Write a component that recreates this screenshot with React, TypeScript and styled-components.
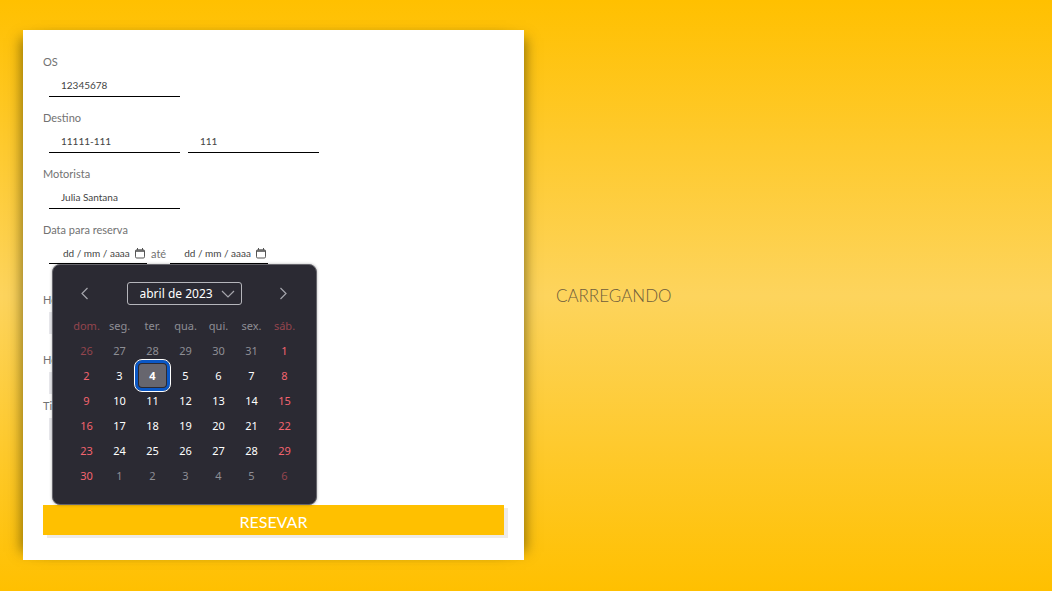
import React from "react";
import styled, { createGlobalStyle } from "styled-components";

const Global = createGlobalStyle`
  * { box-sizing: border-box; }
  body { margin: 0; font-family: Lato, "Open Sans", sans-serif; color: #727272; }
  button, input, select { font-family: inherit; margin: 0; }
`;

const Page = styled.main`
  min-height: 100vh;
  padding: 30px 23px 31px;
  display: grid;
  grid-template-columns: 18fr 17fr;
  gap: 32px;
  background: linear-gradient(#ffc000, #fdd45d, #ffc000);
`;

const Card = styled.form`
  display: flex;
  flex-direction: column;
  padding: 25px 20px;
  background: #fff;
  box-shadow: 10px 0 12px -8px rgba(70, 60, 0, 0.6), -10px 0 12px -8px rgba(70, 60, 0, 0.6);
`;

const Field = styled.div<{ $height: number }>`
  position: relative;
  min-height: ${(p) => p.$height}px;
`;

const Label = styled.label`
  display: block;
  font-size: 11px;
  line-height: 14px;
`;

const Row = styled.div<{ $gap?: number }>`
  display: flex;
  gap: ${(p) => p.$gap ?? 8}px;
  margin: 6px 0 0 6px;
  align-items: center;
  font-size: 11px;
`;

const TextInput = styled.input`
  width: 131px;
  height: 22px;
  padding: 0 12px 2px;
  border: 0;
  border-bottom: 1px solid #000;
  background: transparent;
  font-size: 10px;
  color: #444;
  outline: 0;
`;

const DateBox = styled.div`
  display: flex;
  align-items: center;
  width: 98px;
  height: 21px;
  padding: 0 2px 0 14px;
  border-bottom: 1px solid #000;
`;

const DateInput = styled.input`
  flex: 1;
  min-width: 0;
  padding: 0;
  border: 0;
  background: transparent;
  font-size: 10px;
  color: #444;
  outline: 0;
`;

const IconButton = styled.button`
  display: flex;
  padding: 0;
  border: 0;
  background: transparent;
  color: inherit;
`;

const Choice = styled.select`
  display: block;
  width: 131px;
  height: 22px;
  margin: 5px 0 0 6px;
  border: 0;
  background: #e9e9ed;
  font-size: 11px;
`;

const Submit = styled.button`
  height: 30px;
  margin-top: auto;
  padding: 2px 0 0;
  border: 0;
  background: #ffc000;
  box-shadow: 4px 3px 0 #efebe6;
  color: #fff;
  font-size: 16px;
`;

const Status = styled.p`
  align-self: center;
  margin: 0;
  font-size: 17px;
  font-weight: 300;
  color: #6d5c3b;
`;

const Calendar = styled.section`
  position: absolute;
  z-index: 1;
  top: 41px;
  left: 9px;
  width: 265px;
  height: 241px;
  padding: 17px 16px 17px 17px;
  border: 1px solid #66656c;
  border-radius: 8px;
  background: #2b2a33;
  box-shadow: 0 0 3px rgba(0, 0, 0, 0.3);
  color: #fff;
  font-family: "Noto Sans", sans-serif;
`;

const CalendarHead = styled.div`
  display: flex;
  align-items: center;
  justify-content: space-between;
  height: 23px;
  padding: 0 12px 0 10px;
  color: #a5a5ac;
`;

const MonthBox = styled.div`
  position: relative;
  display: flex;
  align-items: center;
  svg { position: absolute; right: 7px; pointer-events: none; }
`;

const MonthSelect = styled.select`
  appearance: none;
  width: 115px;
  height: 23px;
  padding: 0 12px;
  border: 1px solid #b5b5bb;
  border-radius: 3px;
  background: transparent;
  color: #fff;
  font-size: 12px;
`;

const Days = styled.table`
  margin-top: 8px;
  border-collapse: collapse;
  table-layout: fixed;
  width: 231px;
`;

const Cell = styled.td<{ $weekend: boolean; $muted: boolean }>`
  height: 25px;
  padding: 0;
  text-align: center;
  font-size: 11px;
  font-weight: 400;
  color: ${(p) => (p.$weekend ? (p.$muted ? "#94454e" : "#f3646f") : p.$muted ? "#8e8e95" : "#fff")};
`;

const Day = styled.button<{ $selected: boolean }>`
  display: block;
  width: 27px;
  height: 23px;
  margin: 0 auto;
  padding: 0;
  border: 0;
  border-radius: 3px;
  font-size: 11px;
  color: inherit;
  background: ${(p) => (p.$selected ? "#67666e" : "transparent")};
  font-weight: ${(p) => (p.$selected ? 700 : 400)};
  outline: ${(p) => (p.$selected ? "1px solid #fff" : "none")};
  outline-offset: 4px;
  box-shadow: ${(p) => (p.$selected ? "0 0 0 1px #2b2a33, 0 0 0 4px #0a57c5" : "none")};
`;

const weekdays = ["dom.", "seg.", "ter.", "qua.", "qui.", "sex.", "sáb."];
const weeks = [
  [26, 27, 28, 29, 30, 31, 1],
  [2, 3, 4, 5, 6, 7, 8],
  [9, 10, 11, 12, 13, 14, 15],
  [16, 17, 18, 19, 20, 21, 22],
  [23, 24, 25, 26, 27, 28, 29],
  [30, 1, 2, 3, 4, 5, 6],
];

const isMuted = (week: number, day: number) => (week === 0 && day > 20) || (week === 5 && day < 20);

function Chevron({ d, w, h }: { d: string; w: number; h: number }) {
  return (
    <svg width={w} height={h} viewBox={`0 0 ${w} ${h}`} fill="none" stroke="currentColor" strokeWidth="1.2" aria-hidden="true">
      <path d={d} />
    </svg>
  );
}

function DateField({ id, label }: { id: string; label: string }) {
  return (
    <DateBox>
      <DateInput id={id} aria-label={label} defaultValue="dd / mm / aaaa" />
      <IconButton type="button" aria-label={`Abrir calendário: ${label}`}>
        <svg width="10" height="11" viewBox="0 0 10 11" fill="none" stroke="#555">
          <rect x="0.5" y="1.8" width="9" height="8.2" rx="1.2" />
          <path d="M1 3h8" strokeWidth="1.6" />
          <path d="M2.5 0v2M7.5 0v2" />
        </svg>
      </IconButton>
    </DateBox>
  );
}

function DatePicker() {
  return (
    <Calendar aria-label="Calendário">
      <CalendarHead>
        <IconButton type="button" aria-label="Mês anterior">
          <Chevron d="M7.5 2 2 7.5l5.500 5.500" w={9} h={15} />
        </IconButton>
        <MonthBox>
          <MonthSelect aria-label="Mês">
            <option>abril de 2023</option>
          </MonthSelect>
          <Chevron d="M1 1l6 6 6-6" w={14} h={8} />
        </MonthBox>
        <IconButton type="button" aria-label="Próximo mês">
          <Chevron d="M1.5 2 7 7.500l-5.500 5.500" w={9} h={15} />
        </IconButton>
      </CalendarHead>
      <Days>
        <thead>
          <tr>
            {weekdays.map((name, i) => (
              <Cell as="th" key={name} $weekend={i % 6 === 0} $muted>
                {name}
              </Cell>
            ))}
          </tr>
        </thead>
        <tbody>
          {weeks.map((week, w) => (
            <tr key={w}>
              {week.map((day, i) => (
                <Cell key={day} $weekend={i % 6 === 0} $muted={isMuted(w, day)}>
                  <Day type="button" $selected={w === 1 && day === 4}>
                    {day}
                  </Day>
                </Cell>
              ))}
            </tr>
          ))}
        </tbody>
      </Days>
    </Calendar>
  );
}

export default function App() {
  return (
    <Page>
      <Global />
      <Card>
        <Field $height={56}>
          <Label htmlFor="os">OS</Label>
          <Row>
            <TextInput id="os" defaultValue="12345678" />
          </Row>
        </Field>
        <Field $height={56}>
          <Label htmlFor="destino">Destino</Label>
          <Row>
            <TextInput id="destino" defaultValue="11111-111" />
            <TextInput aria-label="Número" defaultValue="111" />
          </Row>
        </Field>
        <Field $height={56}>
          <Label htmlFor="motorista">Motorista</Label>
          <Row>
            <TextInput id="motorista" defaultValue="Julia Santana" />
          </Row>
        </Field>
        <Field $height={70}>
          <Label htmlFor="inicio">Data para reserva</Label>
          <Row $gap={4}>
            <DateField id="inicio" label="Data inicial" />
            <span>até</span>
            <DateField id="fim" label="Data final" />
          </Row>
          <DatePicker />
        </Field>
        <Field $height={60}>
          <Label htmlFor="saida">Horário</Label>
          <Choice id="saida" />
        </Field>
        <Field $height={46}>
          <Label htmlFor="volta">Horário</Label>
          <Choice id="volta" />
        </Field>
        <Field $height={46}>
          <Label htmlFor="tipo">Tipo</Label>
          <Choice id="tipo" />
        </Field>
        <Submit type="submit">RESEVAR</Submit>
      </Card>
      <Status>CARREGANDO</Status>
    </Page>
  );
}
